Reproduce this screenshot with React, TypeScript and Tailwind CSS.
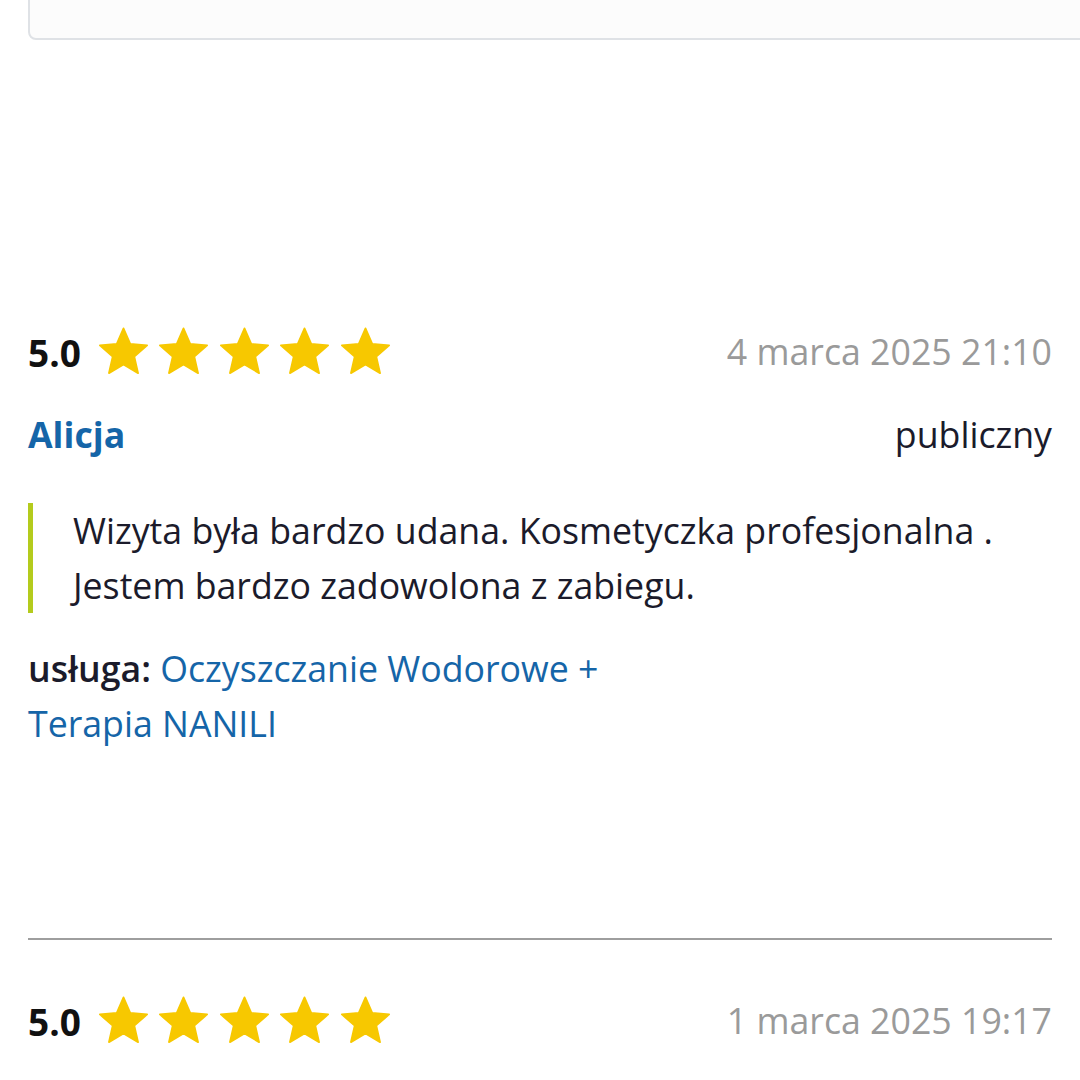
import React from "react";

function Star() {
  return (
    <svg width="53" height="51" viewBox="0 0 24 23" className="block">
      <path
        d="M12 0.6 L15.05 7.6 L22.7 8.3 L16.9 13.35 L18.6 20.85 L12 16.95 L5.4 20.85 L7.1 13.35 L1.3 8.3 L8.95 7.6 Z"
        fill="#f7c800"
        stroke="#f7c800"
        strokeWidth="0.8"
        strokeLinejoin="round"
      />
    </svg>
  );
}

function Stars() {
  return (
    <div className="flex items-center gap-[7.5px]">
      <Star />
      <Star />
      <Star />
      <Star />
      <Star />
    </div>
  );
}

function RatingRow({ date }: { date: string }) {
  return (
    <div className="flex h-[52px] items-center justify-between">
      <div className="flex items-center gap-[16px]">
        <span className="text-[37px] font-bold leading-none text-[#111]">5.0</span>
        <Stars />
      </div>
      <span className="text-[35.7px] leading-none text-[#9a9a9a]">{date}</span>
    </div>
  );
}

export default function App() {
  return (
    <div
      className="h-[1080px] w-[1080px] overflow-hidden bg-white"
      style={{ fontFamily: '"Open Sans", "Noto Sans", sans-serif' }}
    >
      <div className="ml-[28px] -mt-[20px] h-[60px] w-[1100px] rounded-lg border-2 border-[#dfe2e6] bg-[#fcfcfc]" />
      <div className="px-[28px]">
        <div className="mt-[286px]">
          <RatingRow date="4 marca 2025 21:10" />
        </div>
        <div className="mt-[35px] flex h-[44px] items-center justify-between">
          <span className="text-[35.7px] font-bold leading-none text-[#1565a8]">Alicja</span>
          <span className="text-[35.7px] leading-none text-[#1b1b2b]">publiczny</span>
        </div>
        <div className="mt-[46px] border-l-[5px] border-[#b4cb1d] pl-[40px] text-[35.7px] leading-[55px] text-[#1b1b2b]">
          Wizyta była bardzo udana. Kosmetyczka profesjonalna .<br />
          Jestem bardzo zadowolona z zabiegu.
        </div>
        <div className="mt-[28px] max-w-[640px] text-[35.7px] leading-[55px]">
          <span className="font-semibold text-[#1b1b2b]">usługa: </span>
          <span className="text-[#1565a8]">Oczyszczanie Wodorowe + Terapia NANILI</span>
        </div>
        <div className="mt-[187px] h-[2px] bg-[#9e9e9e]" />
        <div className="mt-[55px]">
          <RatingRow date="1 marca 2025 19:17" />
        </div>
      </div>
    </div>
  );
}
